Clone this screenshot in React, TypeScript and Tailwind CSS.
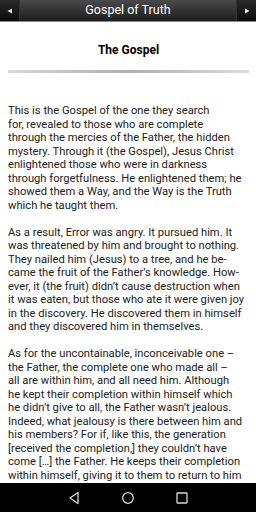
const paragraphs = [
  [
    "This is the Gospel of the one they search",
    "for, revealed to those who are complete",
    "through the mercies of the Father, the hidden",
    "mystery. Through it (the Gospel), Jesus Christ",
    "enlightened those who were in darkness",
    "through forgetfulness. He enlightened them; he",
    "showed them a Way, and the Way is the Truth",
    "which he taught them.",
  ],
  [
    "As a result, Error was angry. It pursued him. It",
    "was threatened by him and brought to nothing.",
    "They nailed him (Jesus) to a tree, and he be-",
    "came the fruit of the Father’s knowledge. How-",
    "ever, it (the fruit) didn’t cause destruction when",
    "it was eaten, but those who ate it were given joy",
    "in the discovery. He discovered them in himself",
    "and they discovered him in themselves.",
  ],
  [
    "As for the uncontainable, inconceivable one –",
    "the Father, the complete one who made all –",
    "all are within him, and all need him. Although",
    "he kept their completion within himself which",
    "he didn’t give to all, the Father wasn’t jealous.",
    "Indeed, what jealousy is there between him and",
    "his members? For if, like this, the generation",
    "[received the completion,] they couldn’t have",
    "come […] the Father. He keeps their completion",
    "within himself, giving it to them to return to him",
    "and perfect knowledge.",
  ],
];

export default function App() {
  return (
    <div className="flex h-[512px] w-[256px] flex-col overflow-hidden bg-white font-['Roboto',sans-serif]">
      <div className="flex h-[22px] shrink-0 border-b border-[#8a8a8a] bg-gradient-to-b from-[#4a4a4a] to-[#1e1e1e]">
        <button className="flex w-[20px] items-center justify-center border-r border-[#333] bg-gradient-to-b from-[#2a2a2a] to-[#0c0c0c]">
          <svg width="6" height="6" viewBox="0 0 6 6"><path d="M5 0.5 L0.5 3 L5 5.5 Z" fill="#e8e8e8" /></svg>
        </button>
        <div className="flex flex-1 items-center justify-center text-[12.5px] text-white">Gospel of Truth</div>
        <button className="flex w-[20px] items-center justify-center border-l border-[#333] bg-gradient-to-b from-[#2a2a2a] to-[#0c0c0c]">
          <svg width="6" height="6" viewBox="0 0 6 6"><path d="M1 0.5 L5.5 3 L1 5.5 Z" fill="#e8e8e8" /></svg>
        </button>
      </div>

      <div className="flex-1 overflow-hidden pl-[8px] pr-[7px]">
        <h1 className="mt-[21px] text-center text-[12px] font-bold leading-[14px] text-black">The Gospel</h1>
        <div className="mt-[13px] h-[3px] bg-gradient-to-r from-[#d8d8d8] via-[#b0b0b0] to-[#dcdcdc]" />
        <div className="mt-[31px] text-[11.2px] leading-[13.5px] text-[#222]">
          {paragraphs.map((lines, i) => (
            <p key={i} className="mb-[13.5px]">
              {lines.map((line, j) => (
                <span key={j} className="block whitespace-nowrap">{line}</span>
              ))}
            </p>
          ))}
        </div>
      </div>

      <div className="flex h-[29px] shrink-0 items-center justify-center gap-[40px] bg-black">
        <svg width="14" height="14" viewBox="0 0 14 14" fill="none" stroke="#d8d8d8" strokeWidth="1.3"><path d="M11 1.5 L3 7 L11 12.5 Z" strokeLinejoin="round" /></svg>
        <svg width="14" height="14" viewBox="0 0 14 14" fill="none" stroke="#d8d8d8" strokeWidth="1.3"><circle cx="7" cy="7" r="5.3" /></svg>
        <svg width="14" height="14" viewBox="0 0 14 14" fill="none" stroke="#d8d8d8" strokeWidth="1.3"><rect x="2" y="2" width="10" height="10" rx="0.5" /></svg>
      </div>
    </div>
  );
}
